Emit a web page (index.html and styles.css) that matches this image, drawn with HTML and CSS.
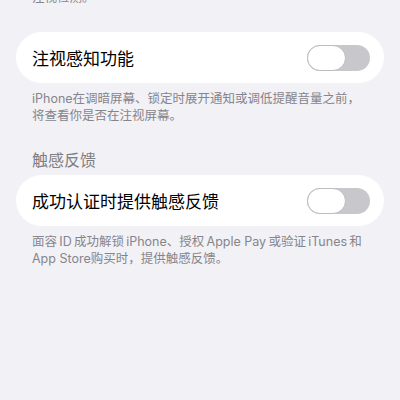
FILE: index.html
```html
<!DOCTYPE html>
<html lang="zh-CN">
<head>
    <meta charset="UTF-8">
    <meta name="viewport" content="width=device-width, initial-scale=1.0">
    <title>面容ID与密码</title>
    <link rel="stylesheet" href="styles.css">
</head>
<body>
    <p class="note note-top">注视检测。</p>

    <div class="card">
        <span class="card-label">注视感知功能</span>
        <div class="switch"><div class="knob"></div></div>
    </div>
    <p class="note">iPhone在调暗屏幕、锁定时展开通知或调低提醒音量之前，将查看你是否在注视屏幕。</p>

    <h2 class="section-title">触感反馈</h2>
    <div class="card">
        <span class="card-label">成功认证时提供触感反馈</span>
        <div class="switch"><div class="knob"></div></div>
    </div>
    <p class="note">面容&thinsp;ID&thinsp;成功解锁&thinsp;iPhone、授权&thinsp;Apple Pay&thinsp;或验证&thinsp;iTunes&thinsp;和 App Store购买时，提供触感反馈。</p>
</body>
</html>
```

FILE: styles.css
```css
body {
    margin: 0;
    padding: 0;
    background: #f2f1f6;
    font-family: 'Inter', 'Noto Sans CJK SC', sans-serif;
    color: #000;
}
.note {
    margin: 8px 0 0;
    padding: 0 32px;
    font-size: 12.5px;
    line-height: 16.5px;
    color: #86858b;
}
.note-top {
    margin-top: -10px;
    margin-bottom: 25.5px;
}
.card {
    display: flex;
    justify-content: space-between;
    align-items: center;
    height: 51px;
    margin: 0 16px;
    padding: 0 14px 0 16px;
    background: #fff;
    border-radius: 26px;
}
.card-label {
    font-size: 17px;
}
.switch {
    width: 63px;
    height: 26px;
    background: #c8c7cc;
    border-radius: 13px;
}
.knob {
    box-sizing: border-box;
    width: 39px;
    height: 26px;
    background: #fff;
    border: 1.5px solid #bdbcc1;
    border-radius: 13px;
}
.section-title {
    margin: 25.5px 0 5.5px;
    padding: 0 32px;
    font-size: 16px;
    line-height: 20px;
    font-weight: normal;
    color: #7e7d83;
}
```
